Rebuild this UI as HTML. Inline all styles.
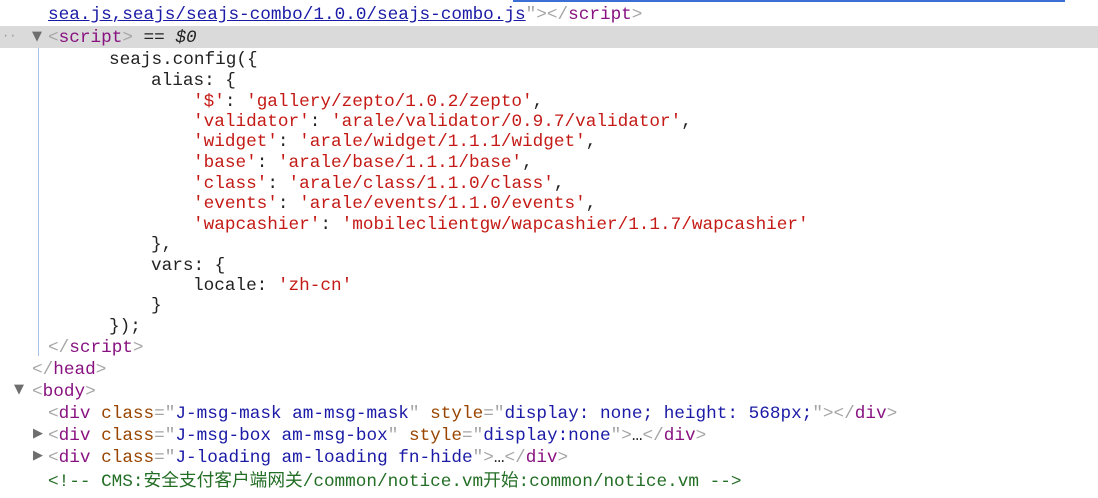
<!DOCTYPE html>
<html><head><meta charset="utf-8"><style>
body{margin:0;width:1098px;height:498px;background:#fff;overflow:hidden;position:relative;font-family:"Liberation Mono","Noto Sans CJK SC",monospace;font-size:17.7px;color:#222}
.l{position:absolute;white-space:pre;line-height:20px}
.t{color:#881280}.b{color:#a5a5a5}.an{color:#994500}.av{color:#1a1aa6}.s{color:#c41a16}.c{color:#236e25}
.u{color:#1a1aa6;text-decoration:underline}
.tri{position:absolute;font-size:13px;color:#6e6e6e;font-family:"DejaVu Sans",sans-serif}
</style></head><body>
<div style="position:absolute;left:513px;top:0;width:552px;height:2px;background:#3b6fd6"></div>
<div class="l" style="left:48px;top:5px"><span class="u">sea.js,seajs/seajs-combo/1.0.0/seajs-combo.js</span><span class="b">"&gt;&lt;/</span><span class="t">script</span><span class="b">&gt;</span></div>
<div style="position:absolute;left:0;top:26px;width:1098px;height:22px;background:#dadada"></div>
<div class="l" style="left:2px;top:26px;color:#999;font-size:12px">··</div>
<div class="tri" style="left:32px;top:29px">▼</div>
<div class="l" style="left:48px;top:28px"><span class="b">&lt;</span><span class="t">script</span><span class="b">&gt;</span> == <i>$0</i></div>
<div style="position:absolute;left:38px;top:48px;width:1px;height:308px;background:#a8c3e8"></div>
<div class="l" style="left:109px;top:50px">seajs.config({</div>
<div class="l" style="left:151px;top:71px">alias: {</div>
<div class="l" style="left:193px;top:92px"><span class="s">'$'</span>: <span class="s">'gallery/zepto/1.0.2/zepto'</span>,</div>
<div class="l" style="left:193px;top:112px"><span class="s">'validator'</span>: <span class="s">'arale/validator/0.9.7/validator'</span>,</div>
<div class="l" style="left:193px;top:132px"><span class="s">'widget'</span>: <span class="s">'arale/widget/1.1.1/widget'</span>,</div>
<div class="l" style="left:193px;top:153px"><span class="s">'base'</span>: <span class="s">'arale/base/1.1.1/base'</span>,</div>
<div class="l" style="left:193px;top:174px"><span class="s">'class'</span>: <span class="s">'arale/class/1.1.0/class'</span>,</div>
<div class="l" style="left:193px;top:194px"><span class="s">'events'</span>: <span class="s">'arale/events/1.1.0/events'</span>,</div>
<div class="l" style="left:193px;top:215px"><span class="s">'wapcashier'</span>: <span class="s">'mobileclientgw/wapcashier/1.1.7/wapcashier'</span></div>
<div class="l" style="left:151px;top:235px">},</div>
<div class="l" style="left:151px;top:256px">vars: {</div>
<div class="l" style="left:193px;top:276px">locale: <span class="s">'zh-cn'</span></div>
<div class="l" style="left:151px;top:296px">}</div>
<div class="l" style="left:109px;top:317px">});</div>
<div class="l" style="left:48px;top:338px"><span class="b">&lt;/</span><span class="t">script</span><span class="b">&gt;</span></div>
<div class="l" style="left:32px;top:360px"><span class="b">&lt;/</span><span class="t">head</span><span class="b">&gt;</span></div>
<div class="tri" style="left:14px;top:382px">▼</div>
<div class="l" style="left:32px;top:382px"><span class="b">&lt;</span><span class="t">body</span><span class="b">&gt;</span></div>
<div class="l" style="left:48px;top:404px"><span class="b">&lt;</span><span class="t">div</span> <span class="an">class</span><span class="b">="</span><span class="av">J-msg-mask am-msg-mask</span><span class="b">"</span> <span class="an">style</span><span class="b">="</span><span class="av">display: none; height: 568px;</span><span class="b">"&gt;&lt;/</span><span class="t">div</span><span class="b">&gt;</span></div>
<div class="tri" style="left:33px;top:426px">▶</div>
<div class="l" style="left:48px;top:426px"><span class="b">&lt;</span><span class="t">div</span> <span class="an">class</span><span class="b">="</span><span class="av">J-msg-box am-msg-box</span><span class="b">"</span> <span class="an">style</span><span class="b">="</span><span class="av">display:none</span><span class="b">"&gt;</span>…<span class="b">&lt;/</span><span class="t">div</span><span class="b">&gt;</span></div>
<div class="tri" style="left:33px;top:448px">▶</div>
<div class="l" style="left:48px;top:448px"><span class="b">&lt;</span><span class="t">div</span> <span class="an">class</span><span class="b">="</span><span class="av">J-loading am-loading fn-hide</span><span class="b">"&gt;</span>…<span class="b">&lt;/</span><span class="t">div</span><span class="b">&gt;</span></div>
<div class="l c" style="left:48px;top:472px">&lt;!-- CMS:安全支付客户端网关/common/notice.vm开始:common/notice.vm --&gt;</div>
</body></html>
